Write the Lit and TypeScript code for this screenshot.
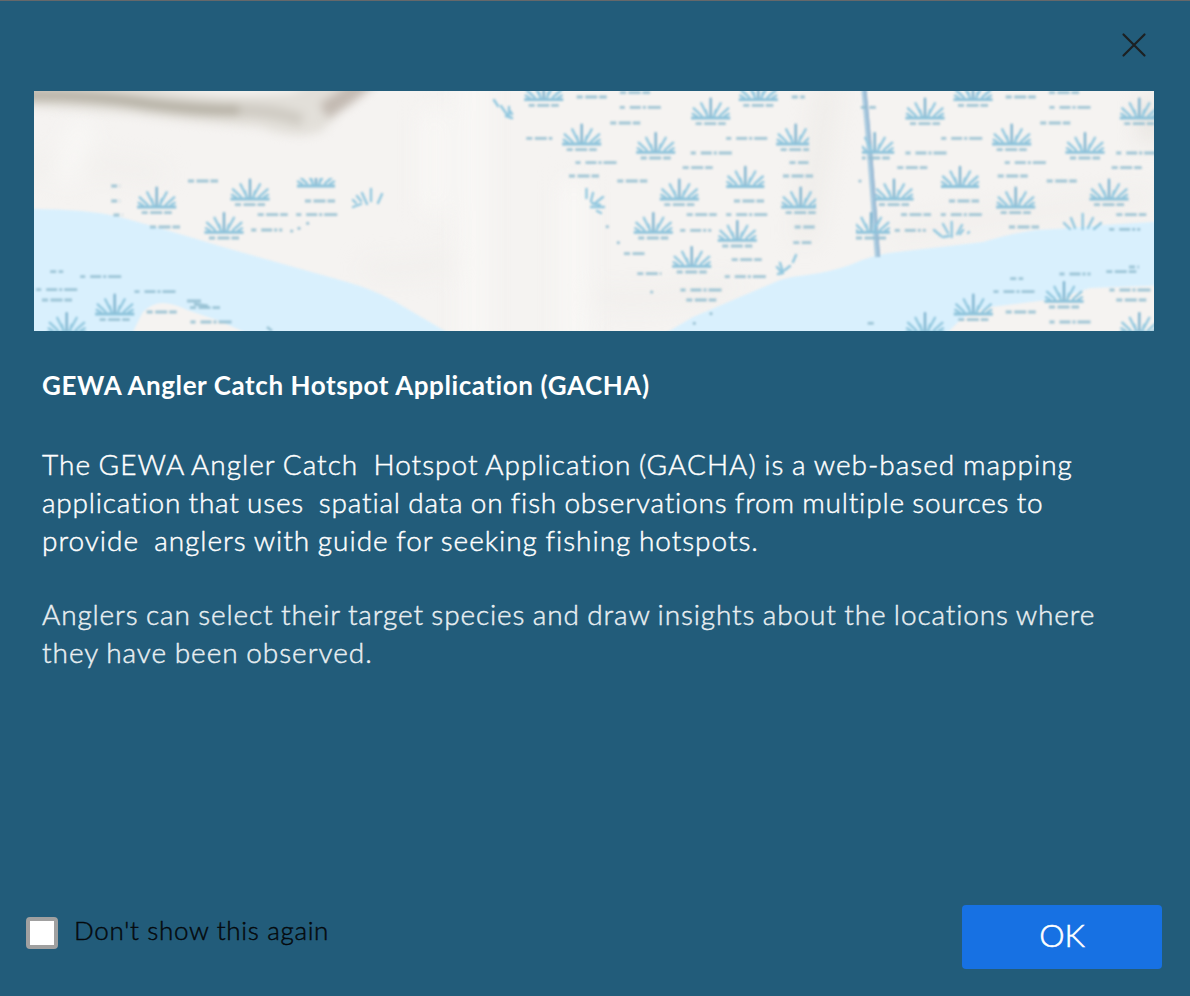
import { LitElement, html, svg, css } from "lit";
import { customElement } from "lit/decorators.js";

type Point = [number, number];
/** x centre, y, width of a row of water dashes */
type Dash = [number, number, number];

const PLANTS: Point[] = [
  [122.7, 116.3], [216, 108.3], [190, 141.7], [80.7, 223.3], [32.7, 241.7],
  [509.7, 9], [676.7, 27.3], [724.3, 9], [547.7, 53.3], [621.7, 61.7],
  [645.3, 108.3], [619.3, 141.7], [703.3, 149.7], [657.7, 175.7],
  [891, 27.3], [939, 9], [1105.3, 27.3], [977.7, 53.3], [1051, 61.7],
  [860, 108.3], [981.7, 116.3], [1075, 108.3], [1030, 210.7],
  [939.3, 223.3], [891, 241.7], [1105.3, 241.7],
];

const SHORT = 30;
const LONG = 41;
const DASHES: Dash[] = [
  [169, 90, SHORT], [286, 110, SHORT], [238.7, 123.7, SHORT], [131, 136, SHORT],
  [23, 209, SHORT], [127.7, 221, SHORT], [171, 216.7, SHORT],
  [81.7, 95, 9], [81.7, 110, 9], [84, 124, 9], [22.7, 180.7, 13],
  [282.7, 123.7, LONG], [232.7, 139, 31], [66.7, 185.7, LONG], [22.7, 198.7, LONG],
  [121, 200.7, LONG], [177, 231, LONG],
  [557.7, 6, SHORT], [601, 1.7, SHORT], [591.3, 32, SHORT], [663.7, 76.7, SHORT],
  [550, 85, SHORT], [598.3, 90, SHORT], [715, 110, SHORT], [667.7, 123.7, SHORT],
  [712.7, 168.7, SHORT], [667.3, 209, SHORT], [601, 162.7, 22], [505.3, 47.3, 26],
  [615.3, 182.7, 24], [606.3, 16.3, LONG], [712.7, 47.3, LONG], [677.3, 62, LONG],
  [562, 71.7, LONG], [712.7, 123.7, LONG], [661.7, 139.3, 31], [711.3, 185.7, LONG],
  [667, 199, LONG],
  [764.3, 6, 13], [986.7, 6, SHORT], [1030, 1.7, SHORT], [1021.3, 32, SHORT],
  [878.3, 76.7, SHORT], [765, 71.7, 19], [764, 85, SHORT], [978.7, 85, SHORT],
  [1092.7, 76.7, SHORT], [1027.7, 90, SHORT], [930, 110, SHORT], [882, 123.7, SHORT],
  [1097.3, 123.7, SHORT], [770.7, 136, 20], [990, 136, SHORT], [768.3, 151.7, 18],
  [1087.3, 180.7, SHORT], [986.7, 221, SHORT], [1097.3, 209, SHORT], [982.7, 187.7, 13],
  [837.7, 232.3, 8], [1100, 176, 10], [834.3, 16.3, 15],
  [1036, 16.3, LONG], [927.7, 47.3, LONG], [892, 62, LONG], [991.3, 71.7, LONG],
  [1102.7, 62, LONG], [927.3, 123.7, LONG], [876.3, 139.3, 31], [1090.7, 138.3, 31],
  [980, 200.7, LONG], [1041, 183, 31], [1096, 199, LONG], [1036, 231, LONG],
];

const SPECKS: Point[] = [
  [257.7, 140], [265, 137.3], [273.7, 132.3], [573.3, 135.7], [584.3, 151.7],
  [617.7, 201], [677, 222.7], [660.3, 232.3], [826, 90],
];

@customElement("map-banner")
export class MapBanner extends LitElement {
  static styles = css`
    :host { display: block; height: 240px; overflow: hidden; }
    svg { display: block; }
    .land { fill: #f5f3f1; }
    .water { fill: #d9f0fd; }
    .rays { fill: none; stroke: #93c8df; stroke-width: 2.4; stroke-linecap: round; }
    .base { stroke: #8cc2da; stroke-width: 2.8; }
    .stem { stroke: #7fb4cf; }
    .dash { stroke: #92bdd0; stroke-width: 2.8; fill: none; opacity: .85; }
    .short { stroke-dasharray: 6 2.5 12 2 7.5 40; }
    .long { stroke-dasharray: 5 5 11 2 3 2 13 40; }
    .canal { fill: none; stroke: #a9cadf; stroke-width: 5; }
    .canal-edge { fill: none; stroke: #93b4d0; stroke-width: 1.8; }
    .speck { fill: #9cc3d5; }
  `;

  private rays() {
    return svg`<path class="rays stem" d="M0 -2V-19.5"/>
      <path class="rays" d="M-3.5 -3L-9.5 -15M3.5 -3L10 -15M-9 -2.5L-17 -10M9 -2.5L17.5 -10M-14 -2L-18 -4.5M14 -2L18 -4.500M-3 -2L-5 -8M3 -2L5 -8"/>`;
  }

  private plant([x, y]: Point) {
    return svg`<g transform="translate(${x} ${y})">
      ${this.rays()}
      <path class="base" d="M-19.5 -.3H19.5"/>
      <path class="dash short" d="M-15 5.3H15"/>
    </g>`;
  }

  private dash([x, y, w]: Dash) {
    return svg`<path class="dash ${w > 30 ? "long" : "short"}" d="M${x - w / 2} ${y}h${w}"/>`;
  }

  render() {
    return html`<svg width="1120" height="240" viewBox="0 0 1120 240" role="img" aria-label="Map">
      <defs>
        <filter id="soft" x="-10" y="-10" width="1140" height="260" filterUnits="userSpaceOnUse" color-interpolation-filters="sRGB"><feGaussianBlur stdDeviation="0.95"/></filter>
        <filter id="haze" x="-60" y="-60" width="1240" height="360" filterUnits="userSpaceOnUse" color-interpolation-filters="sRGB"><feGaussianBlur stdDeviation="5"/></filter>
        <filter id="mist" x="-60" y="-60" width="1240" height="360" filterUnits="userSpaceOnUse" color-interpolation-filters="sRGB"><feGaussianBlur stdDeviation="12"/></filter>
        <clipPath id="cutA"><path d="M735 30H775V64H735z"/></clipPath>
        <clipPath id="cutB"><path d="M740 90H782V126H740z"/></clipPath>
        <clipPath id="cutC"><path d="M828 35H862V70H828z"/></clipPath>
        <clipPath id="cutD"><path d="M822 118H856V150H822z"/></clipPath>
        <clipPath id="cutTop"><path d="M-22 -8H22V3H-22z"/></clipPath>
      </defs>
      <rect class="land" width="1120" height="240"/>
      <g filter="url(#mist)">
        <path d="M-10 78Q40 65 130 85M330 178Q380 180 420 170M560 205Q620 215 700 195M860 145Q960 125 1120 105" fill="none" stroke="#efedea" stroke-width="12"/>
        <path d="M795 -10L785 60L770 150" fill="none" stroke="#ebe9e5" stroke-width="14"/>
        <path d="M1116 10V50" stroke="#dfdbd4" stroke-width="14"/>
        <path d="M440 -20V260M540 90V260M50 30L30 90M400 20V120" fill="none" stroke="#f9f8f6" stroke-width="22"/>
      </g>
      <g filter="url(#haze)">
        <path d="M-20 -14H337Q304 22 288 40Q264 50 225 36Q150 31 100 23Q40 18 -20 15z" fill="#e2dfd9"/>
        <path d="M-20 4Q60 3 115 13Q170 20 215 19" fill="none" stroke="#b5b0a4" stroke-width="11"/>
        <path d="M205 19Q240 19 268 29" fill="none" stroke="#cfcbc3" stroke-width="13"/>
        <path d="M336 -14Q312 8 290 20" fill="none" stroke="#c2b9b1" stroke-width="17"/>
        <path d="M125 -14H290L258 2Q190 9 125 -4" fill="#f5f3f0"/>
      </g>
      <g filter="url(#soft)">
        <path class="water" d="M-15 118Q50 117 86 126Q140 141 189 156L313 191Q338 198 360 210L411 240V256H-15z"/>
        <path class="land" d="M92 256Q103 232 109 221Q118 212 129 212Q142 213 153 219L183 229L222 246V256z"/>
        <path class="water" d="M608 256L659 226L746 189Q759 185 773 184Q796 181 816 174Q840 163 863 161L949 151Q978 142 1003 139Q1040 137 1069 134L1136 130V194L1056 197Q1040 202 1029 207L956 216Q934 221 923 232L900 256z"/>
        <path class="canal" d="M829.4 -8L835 54L843.5 166"/>
        <path class="canal-edge" d="M830.8 -8L836.7 54L845.3 166"/>
        ${PLANTS.map((p) => this.plant(p))}
        <g clip-path="url(#cutA)">${this.plant([761.7, 53.3])}</g>
        <g clip-path="url(#cutB)">${this.plant([766.7, 116.3])}</g>
        <g clip-path="url(#cutC)">${this.plant([840.7, 61.7])}</g>
        <g clip-path="url(#cutD)">${this.plant([837, 141.7])}</g>
        ${[[711.3, 95.5], [926, 95.5]].map(([x, y]) => svg`<g transform="translate(${x} ${y})">${this.rays()}<path class="base" d="M-19 0H19"/></g>`)}
        <g transform="translate(282 95)"><g clip-path="url(#cutTop)">${this.rays()}<path class="base" d="M-19 0H19"/></g></g>
        <path class="rays" d="M1036 138l-6 -6M1041 137l-4 -10M1048.7 138V123M1054 137l5 -10M1060 138l7 -6M907 145l-7 -6M909 146l6 -1M914 142l-5 -9M917.7 146V131M923 143l5 -9M926 143l3 -4M934 142l1 -1"/>
        <path class="rays" d="M319 116L327 113M322 112L319 109M327 110L323 105M333 113L328 102M337 110V98M344 112L348 103M460 9l4 6M467 15l7 10M472 25l6 2M475 24l0 -8M478 23l-2 -3"/>
        <path class="rays" d="M552.5 98V107M559 102l-2 8M558 112l8 2M560 113l9 -7M557 116h13M563 120l4 2M743 176l5 6M746 172l3 9M744 183l5 -1M751 179l5 -4M759 171l3 -7"/>
        <path class="dash" d="M153 210h14M160 213l14 2M233 236l5 4" />
        ${DASHES.map((d) => this.dash(d))}
        ${SPECKS.map(([x, y]) => svg`<circle class="speck" cx=${x} cy=${y} r="1.6"/>`)}
      </g>
    </svg>`;
  }
}

@customElement("app-root")
export class AppRoot extends LitElement {
  static styles = css`
    :host {
      display: flex; flex-direction: column; box-sizing: border-box;
      width: 1190px; height: 996px; overflow: hidden;
      background: #225c7a; border-top: 1px solid #66686a;
      font-family: Lato, "Open Sans", sans-serif; color: #fff;
      font-variant-ligatures: none;
    }
    header { display: flex; justify-content: flex-end; height: 90px; box-sizing: border-box; padding: 31px 43px 0 0; }
    .close { display: block; width: 26px; height: 26px; padding: 0; border: 0; background: none; }
    .close svg { display: block; }
    map-banner { margin: 0 36px 0 34px; }
    .content { flex: 1; padding: 35px 42px 0; white-space: pre; }
    h1 { margin: 0; font-size: 26px; line-height: 38px; font-weight: 700; letter-spacing: .58px; }
    p { margin: 0; font-size: 28px; line-height: 38px; font-weight: 300; -webkit-text-stroke: .45px currentColor; word-spacing: -1px; }
    .intro { margin-top: 41px; }
    .more { margin-top: 36px; color: #e9eff2; }
    .line { display: block; }
    .l1 { letter-spacing: 1.01px; }
    .l2 { letter-spacing: .8px; }
    .l3 { letter-spacing: .98px; }
    .l4 { letter-spacing: .87px; }
    .l5 { letter-spacing: .98px; }
    footer { display: flex; justify-content: space-between; align-items: flex-start; height: 91px; padding: 0 28px 0 26px; }
    label { display: flex; align-items: flex-start; gap: 16px; padding-top: 12px; color: #05090c; font-size: 26px; line-height: 32px; }
    .box { width: 24px; height: 24px; border: 4px solid #a0a0a0; border-radius: 4px; background: #fff; }
    .label-text { margin-top: -3px; font-weight: 300; -webkit-text-stroke: .45px currentColor; letter-spacing: .67px; }
    .ok { width: 200px; height: 64px; padding: 0 0 4px; border: 0; border-radius: 4px; background: #1771e3; color: #fff; font: 300 32px/60px Lato, sans-serif; -webkit-text-stroke: .6px currentColor; }
  `;

  render() {
    return html`
      <header>
        <button class="close" aria-label="Close">
          <svg width="26" height="26" viewBox="0 0 26 26"><path d="M2.500 2.500L23.500 23.500M23.500 2.500L2.500 23.500" stroke="#1d2022" stroke-width="2.200" stroke-linecap="round" fill="none"/></svg>
        </button>
      </header>
      <map-banner></map-banner>
      <div class="content"><h1><span class="title">GEWA Angler Catch Hotspot Application (GACHA)</span></h1><p class="intro"><span class="line l1">The GEWA Angler Catch  Hotspot Application (GACHA) is a web-based mapping</span><span class="line l2">application that uses  spatial data on fish observations from multiple sources to</span><span class="line l3">provide  anglers with guide for seeking fishing hotspots.</span></p><p class="more"><span class="line l4">Anglers can select their target species and draw insights about the locations where</span><span class="line l5">they have been observed.</span></p></div>
      <footer>
        <label><span class="box"></span><span class="label-text">Don't show this again</span></label>
        <button class="ok">OK</button>
      </footer>
    `;
  }
}
